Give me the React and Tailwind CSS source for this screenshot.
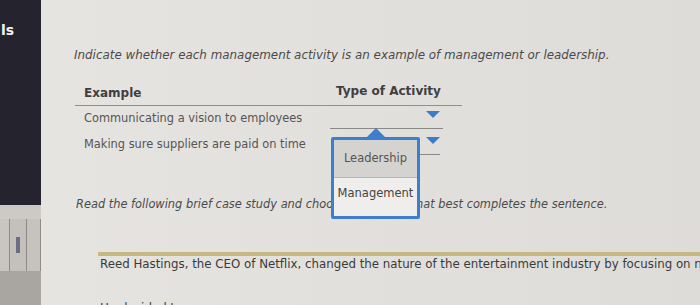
import React from 'react';

const font = { fontFamily: '"DejaVu Sans", Verdana, sans-serif' };

function Caret() {
  return (
    <svg width="14" height="7" viewBox="0 0 14 7" className="block">
      <path d="M0 0 L14 0 L7 7 Z" fill="#3d7cc9" />
    </svg>
  );
}

function Sidebar() {
  return (
    <div className="flex w-[41px] shrink-0 flex-col bg-[#25242e]">
      <div className="pt-[22px] pl-[1px] text-[14px] font-bold leading-[16px] text-[#f2f2f2]">ls</div>
      <div className="flex-1" />
      <div className="flex h-[100px] flex-col bg-[#b9b6b1]">
        <div className="h-[14px] bg-[#cdcac5]" />
        <div className="flex h-[52px] gap-[1px] bg-[#8e8c88] pr-[1px]">
          <div className="w-[9px] bg-[#c9c6c1]" />
          <div className="flex w-[16px] items-center justify-center bg-[#c4c1bc]">
            <div className="h-[16px] w-[4px] bg-[#6b6f86]" />
          </div>
          <div className="flex-1 bg-[#c6c3be]" />
        </div>
        <div className="flex-1 bg-[#a9a6a1]" />
      </div>
    </div>
  );
}

function Popup() {
  return (
    <div className="absolute left-[290px] top-[128px] flex w-[89px] flex-col items-center">
      <svg width="18" height="9" viewBox="0 0 18 9" className="block">
        <path d="M0 9 L9 0 L18 9 Z" fill="#3d7fcd" />
      </svg>
      <div className="w-full rounded-[2px] border-[3px] border-[#3d7fcd] bg-[#efeeec]">
        <div className="flex h-[38px] items-center justify-center border-b border-[#b9b7b3] bg-[#d4d3cf] text-[11.5px] text-[#555]">
          Leadership
        </div>
        <div className="flex h-[38px] items-start justify-center pt-[7px] text-[11.5px] text-[#444]">
          Management
        </div>
      </div>
    </div>
  );
}

export default function App() {
  return (
    <div className="flex h-[305px] w-[700px] overflow-hidden bg-[#e3e1dd]" style={font}>
      <Sidebar />
      <main className="relative flex-1 overflow-hidden bg-gradient-to-r from-[#e6e4e0] to-[#dedcd8]">
        <p className="mt-[47px] ml-[33px] whitespace-nowrap text-[11.9px] italic leading-[16px] text-[#4b4b4b]">
          Indicate whether each management activity is an example of management or leadership.
        </p>

        <div className="mt-[17px] ml-[34px] w-[387px]">
          <div className="flex h-[26px] items-center border-b border-[#8f8e8b] text-[12px] font-bold text-[#3f3f3f]">
            <div className="w-[261px] pl-[9px]">Example</div>
            <div className="-mt-[4px]">Type of Activity</div>
          </div>
          <div className="flex h-[26px] items-center text-[11.4px] text-[#555]">
            <div className="w-[255px] pl-[9px]">Communicating a vision to employees</div>
            <div className="flex h-[20px] w-[113px] items-start justify-end border-b border-[#8a8986] pt-[2px] pr-[3px]">
              <Caret />
            </div>
          </div>
          <div className="flex h-[26px] items-center text-[11.4px] text-[#555]">
            <div className="w-[255px] pl-[9px]">Making sure suppliers are paid on time</div>
            <div className="flex h-[20px] w-[113px] items-start justify-end pt-[2px] pr-[3px]">
              <div className="flex h-[18px] w-[28px] items-start justify-end border-b border-[#8a8986]">
                <Caret />
              </div>
            </div>
          </div>
        </div>

        <p className="mt-[38px] ml-[35px] whitespace-nowrap text-[11.4px] italic leading-[16px] text-[#4b4b4b]">
          Read the following brief case study and choose the option that best completes the sentence.
        </p>

        <div className="mt-[40px] ml-[57px] h-[4px] bg-[#c4b883]" />

        <p className="mt-0 ml-[59px] whitespace-nowrap text-[11.8px] leading-[16px] text-[#3a3a3a]">
          Reed Hastings, the CEO of Netflix, changed the nature of the entertainment industry by focusing on new technologies.
        </p>
        <p className="mt-[28px] ml-[59px] whitespace-nowrap text-[11.8px] leading-[16px] text-[#3a3a3a]">
          He decided to
        </p>

        <Popup />
      </main>
    </div>
  );
}
